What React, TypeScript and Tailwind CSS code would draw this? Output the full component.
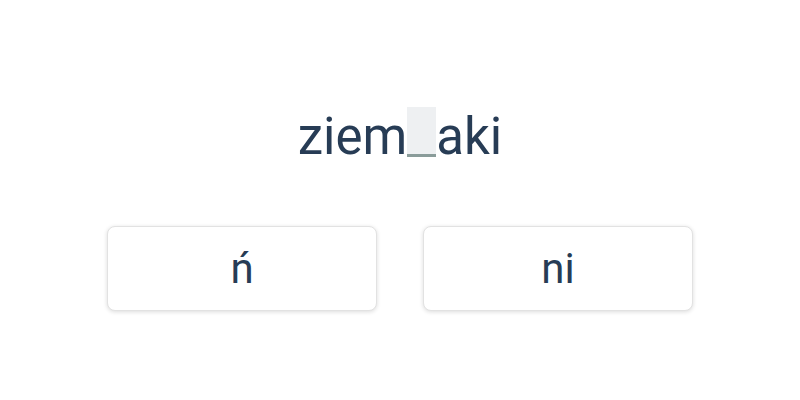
import React from "react";

export default function App() {
  return (
    <div className="w-[800px] h-[400px] bg-white flex flex-col items-center" style={{ fontFamily: "Roboto, sans-serif" }}>
      <div className="mt-[107px] h-[50px] flex items-end text-[51px] leading-none text-[#273c55]">
        <span className="mb-[-5px]">ziem</span>
        <span className="inline-block w-[29px] h-[50px] bg-[#eef0f2] border-b-[3px] border-[#8a9c9a]"></span>
        <span className="mb-[-5px]">aki</span>
      </div>
      <div className="mt-[69px] flex gap-[46px]">
        <button className="w-[270px] h-[85px] rounded-[8px] bg-white border border-[#e2e2e2] shadow-[0_1px_4px_rgba(0,0,0,0.14)] text-[42px] text-[#273c55] flex items-center justify-center">
          ń
        </button>
        <button className="w-[270px] h-[85px] rounded-[8px] bg-white border border-[#e2e2e2] shadow-[0_1px_4px_rgba(0,0,0,0.14)] text-[42px] text-[#273c55] flex items-center justify-center">
          ni
        </button>
      </div>
    </div>
  );
}
